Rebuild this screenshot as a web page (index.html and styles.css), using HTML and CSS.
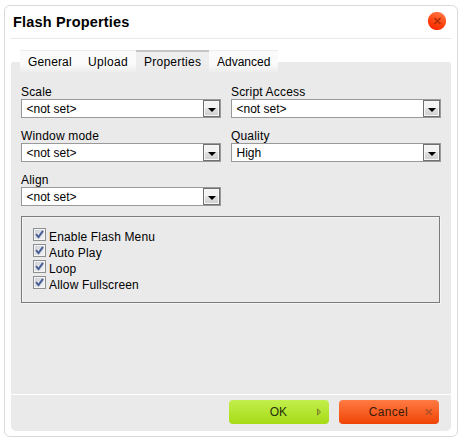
FILE: index.html
```html
<!DOCTYPE html>
<html lang="en">
<head>
<meta charset="utf-8">
<title>Flash Properties</title>
<link rel="stylesheet" href="styles.css">
</head>
<body>
<div class="dialog">
  <header class="title">
    <span class="title-text">Flash Properties</span>
    <svg class="close" width="18" height="18" viewBox="0 0 18 18">
      <defs><linearGradient id="red" x1="0.7" y1="0" x2="0.3" y2="1"><stop offset="0" stop-color="#ff7945"/><stop offset=".55" stop-color="#ff4510"/><stop offset="1" stop-color="#fc2500"/></linearGradient></defs>
      <circle cx="9" cy="9" r="9.1" fill="url(#red)"/>
      <path d="M6.5 6 L12.5 12 M12.5 6 L6.5 12" stroke="#b02c08" stroke-width="1.7"/>
    </svg>
  </header>
  <nav class="tabs">
    <span class="tab general">General</span><span class="tab upload">Upload</span><span class="tab active">Properties</span><span class="tab advanced">Advanced</span>
  </nav>
  <main class="panel">
    <div class="fields">
      <div class="field"><label>Scale</label><div class="select"><span>&lt;not set&gt;</span><i class="drop"></i></div></div>
      <div class="field"><label>Script Access</label><div class="select"><span>&lt;not set&gt;</span><i class="drop"></i></div></div>
      <div class="field"><label>Window mode</label><div class="select"><span>&lt;not set&gt;</span><i class="drop"></i></div></div>
      <div class="field"><label>Quality</label><div class="select"><span>High</span><i class="drop"></i></div></div>
      <div class="field"><label>Align</label><div class="select"><span>&lt;not set&gt;</span><i class="drop"></i></div></div>
    </div>
    <div class="options">
      <div class="option"><i class="check"><svg width="9" height="9" viewBox="0 0 9 9"><path d="M1 4.2 L3.5 7.2 L8 .8"/></svg></i><span>Enable Flash Menu</span></div>
      <div class="option"><i class="check"><svg width="9" height="9" viewBox="0 0 9 9"><path d="M1 4.2 L3.5 7.2 L8 .8"/></svg></i><span>Auto Play</span></div>
      <div class="option"><i class="check"><svg width="9" height="9" viewBox="0 0 9 9"><path d="M1 4.2 L3.5 7.2 L8 .8"/></svg></i><span>Loop</span></div>
      <div class="option"><i class="check"><svg width="9" height="9" viewBox="0 0 9 9"><path d="M1 4.2 L3.5 7.2 L8 .8"/></svg></i><span>Allow Fullscreen</span></div>
    </div>
  </main>
  <footer class="footer">
    <div class="button ok"><span>OK</span><svg width="8" height="8" viewBox="0 0 8 8"><path d="M2.5 .8 V7.2 L5.5 4 Z" fill="#a3bf32" stroke="#7f8128"/></svg></div>
    <div class="button cancel"><span>Cancel</span><svg width="8" height="8" viewBox="0 0 8 8"><path d="M.8 1.2 L6.8 6.8 M6.8 1.2 L.8 6.8" stroke="#a9502b" stroke-width="1.3"/></svg></div>
  </footer>
</div>
</body>
</html>
```

FILE: styles.css
```css
* { box-sizing: border-box; }
body {
  margin: 0;
  background: #fff;
  color: #000;
  font: 12px/14px "Liberation Sans", Arial, sans-serif;
}
.dialog {
  width: 454px;
  height: 432px;
  margin: 5px 0 0 4px;
  padding: 0 6px;
  border: 1px solid #d9d9d9;
  border-radius: 6px;
}
.title {
  display: flex;
  justify-content: space-between;
  height: 33px;
  margin: 0 -1px;
  padding: 6px 6px 0 3px;
  border-bottom: 1px solid #ebebeb;
}
.title-text {
  padding-top: 2px;
  font-size: 14.5px;
  font-weight: bold;
  line-height: 16px;
  letter-spacing: .18px;
  white-space: nowrap;
}
.close { display: block; }
.tabs {
  position: relative;
  display: flex;
  height: 23px;
  padding: 11px 0 0 9px;
}
.tab {
  flex: none;
  height: 22px;
  padding: 4px 0 0 8px;
  border-top: 1px solid #eee;
  background: linear-gradient(#fafafa, #fbfbfb 60%, #ededed);
  letter-spacing: .15px;
}
.general { width: 60px; }
.upload { width: 56px; letter-spacing: .35px; }
.active {
  width: 73px;
  border-top: 2px solid #c5c5c5;
  padding-top: 3px;
  background: linear-gradient(#efefef, #ebebeb);
  letter-spacing: .25px;
}
.advanced { width: 69px; letter-spacing: 0; }
.panel {
  height: 332px;
  padding: 23px 10px 0;
  background: #eaeaea;
  border-radius: 2px 2px 0 0;
}
.fields {
  display: grid;
  grid-template-columns: 200px 210px;
  grid-auto-rows: 44px;
  column-gap: 10px;
}
.field label {
  display: block;
  height: 14px;
  letter-spacing: .18px;
}
.select {
  display: flex;
  justify-content: space-between;
  height: 19px;
  border: 1px solid #999;
  background: #fff;
}
.select span { padding: 2px 0 0 4.5px; }
.drop {
  display: grid;
  place-items: center;
  width: 17px;
  height: 17px;
  border: 1px solid #707070;
  background: linear-gradient(#f3f3f3 0 50%, #e0e0e0 50%, #cfcfcf);
  box-shadow: inset 0 0 0 1px #f7f7f7;
}
.drop::after {
  content: "";
  margin-top: 3px;
  border: solid transparent;
  border-width: 4px 4px 0;
  border-top-color: #000;
}
.options {
  width: 419px;
  height: 87px;
  margin-top: -1px;
  padding: 11px;
  border: 1px solid #7b7b7b;
  box-shadow: inset 1px 1px #f5f5f5, 1px 1px #f5f5f5;
}
.option {
  display: flex;
  height: 16px;
  gap: 3px;
  letter-spacing: .16px;
}
.option span { padding-top: 2px; }
.check {
  display: grid;
  place-items: center;
  width: 13px;
  height: 13px;
  border: 1px solid #8e8f8f;
  background: linear-gradient(135deg, #c9cfd6, #f6f6f6);
  box-shadow: inset 0 0 0 1px #f4f4f4;
}
.check path { fill: none; stroke: #4a5f97; stroke-width: 2; }
.footer {
  display: flex;
  justify-content: flex-end;
  gap: 10px;
  height: 37px;
  padding: 5px 12px 0 0;
  border-top: 1px solid #fff;
  border-radius: 0 0 5px 5px;
  background: #eaeaea;
}
.button {
  display: flex;
  align-items: center;
  justify-content: flex-end;
  width: 100px;
  height: 24px;
  padding-right: 6px;
  border-radius: 4px;
  color: #26310d;
}
.ok { background: linear-gradient(#c3ee4d, #a5dc16); }
.ok svg { margin-left: 28px; }
.cancel { background: linear-gradient(#ff7b43, #ef4405); color: #3b1a0b; letter-spacing: .3px; }
.cancel svg { margin-left: 17px; }
```
